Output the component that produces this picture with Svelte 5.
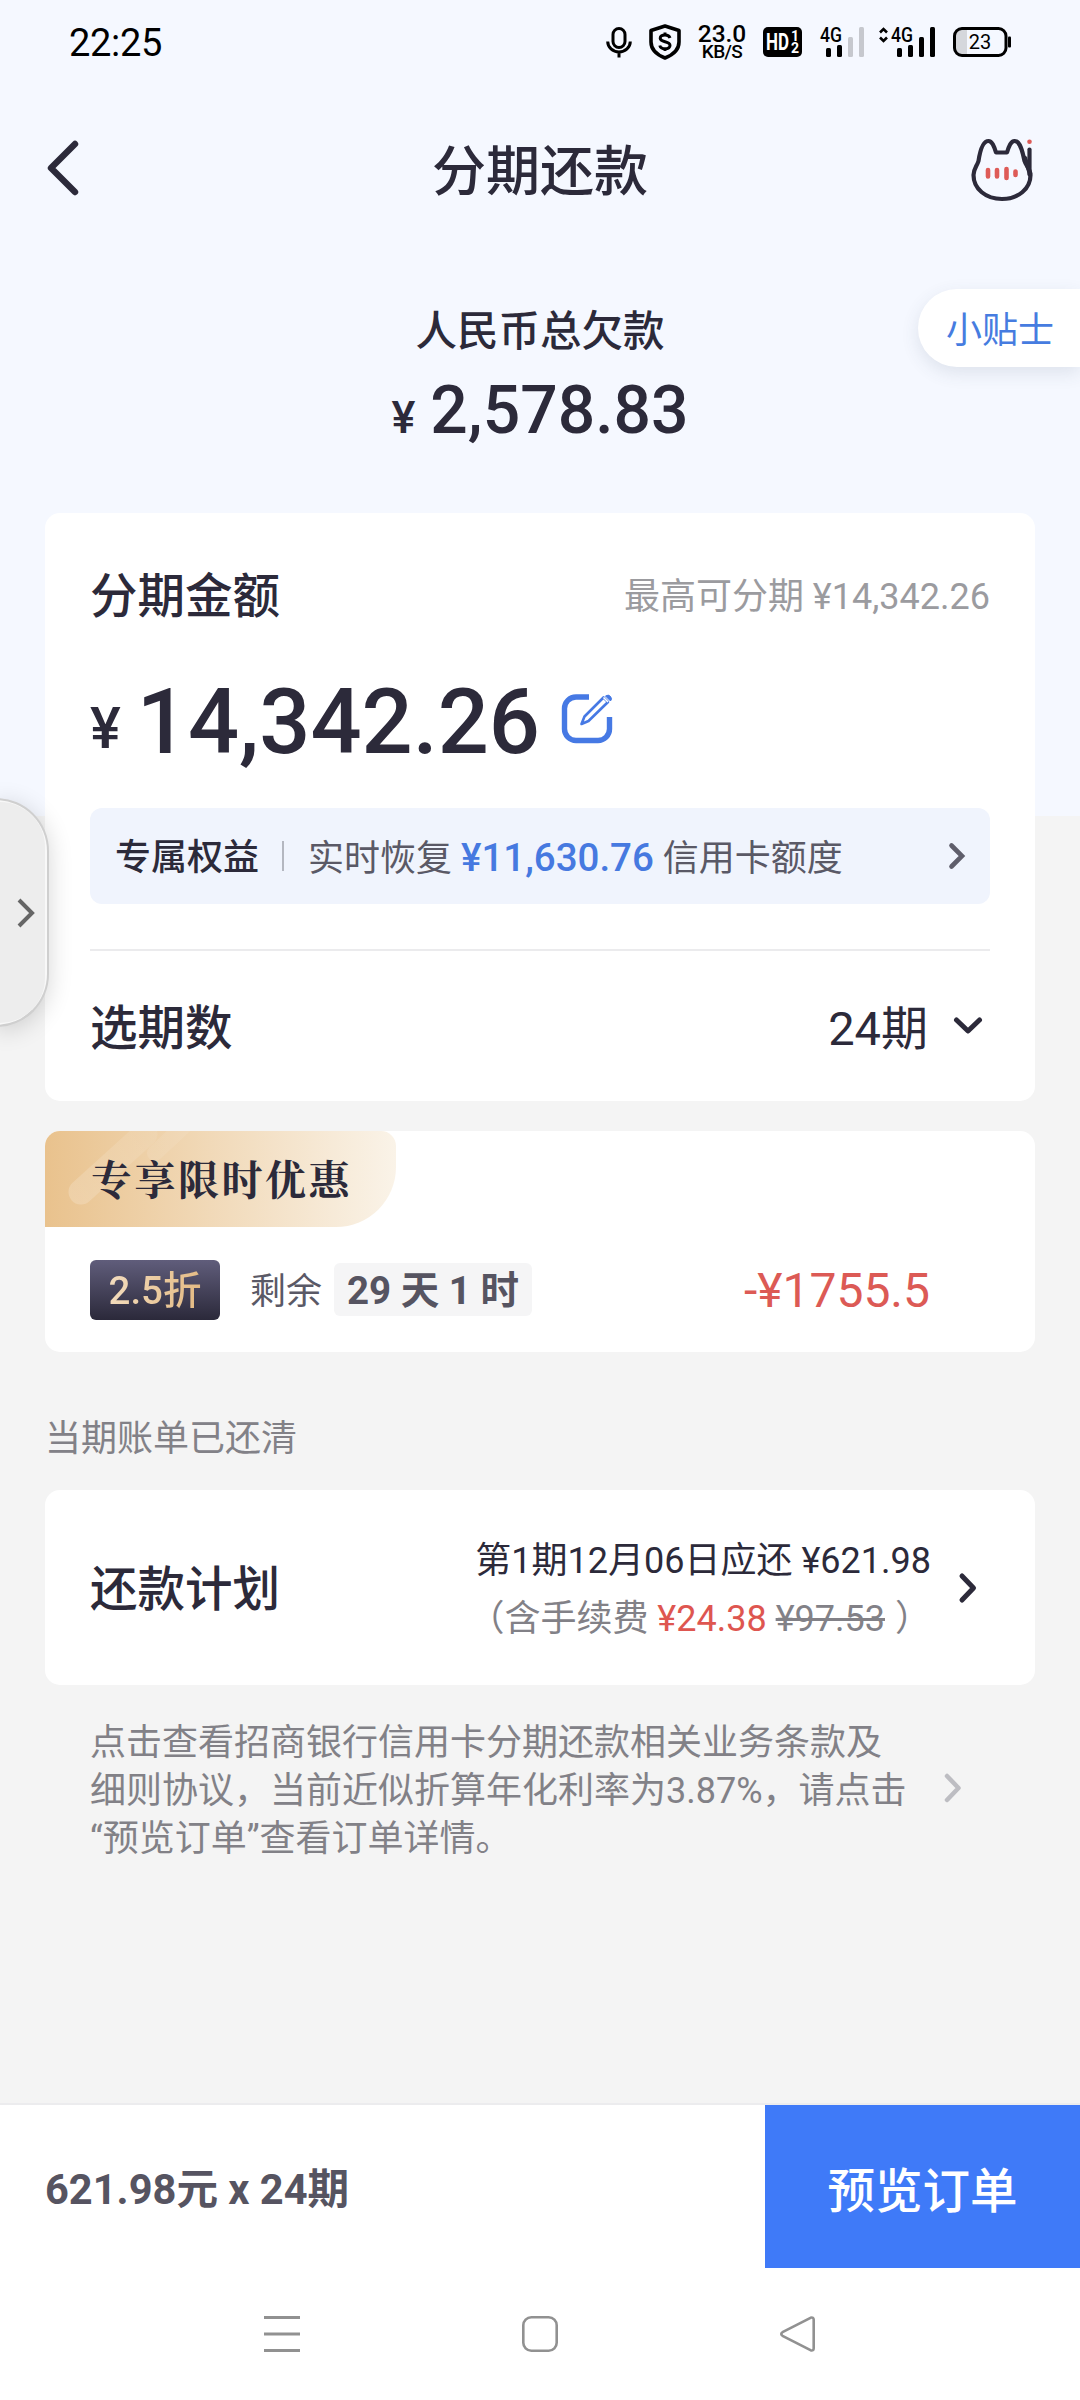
<script>
  const speed = { value: '23.0', unit: 'KB/S' };
  const battery = 23;

  const order = {
    totalDebt: '2,578.83',
    amount: '14,342.26',
    restored: '¥11,630.76',
    periods: 24,
    discount: '-¥1755.5',
    perPeriod: '621.98'
  };

  const terms = [
    '点击查看招商银行信用卡分期还款相关业务条款及',
    '细则协议，当前近似折算年化利率为3.87%，请点击',
    '“预览订单”查看订单详情。'
  ];
</script>

{#snippet signal(level)}
  <svg class="signal" width="45" height="36" viewBox="0 -3 45 36">
    <text x="0" y="15" class="signal-label" textLength="22" lengthAdjust="spacingAndGlyphs">4G</text>
    {#each [9, 12, 20, 30] as h, i}
      <rect x={6 + i * 11} y={30 - h} width="5" height={h} rx="1.5" fill={i < level ? '#000' : '#c6c8ce'} />
    {/each}
  </svg>
{/snippet}

<div class="screen">
  <div class="status-bar">
    <span class="clock">22:25</span>
    <div class="status-icons">
      <svg class="mic" width="26" height="32" viewBox="0 0 26 32" fill="none" stroke="#000" stroke-width="3">
        <rect x="7" y="2.5" width="12" height="19" rx="6" />
        <path d="M1.7 15.5a11.3 10.5 0 0 0 22.6 0M13 26v5.5" />
      </svg>
      <svg class="shield" width="32" height="36" viewBox="0 0 32 36" fill="none" stroke="#000" stroke-width="3.6" stroke-linejoin="round">
        <path d="M16 2 30 6.5V18c0 8-5 12.5-14 16C7 30.5 2 26 2 18V6.5Z" />
        <path d="M21 14c-.6-2-2.4-3-5-3-2.8 0-4.8 1.2-4.8 3.3 0 4.4 9.8 2.4 9.8 7 0 2.2-2 3.5-5 3.5-2.8 0-4.7-1.2-5.2-3.3M16 8.500v2.500M16 24.500v2.500" stroke-width="3" />
      </svg>
      <div class="speed">
        <span class="speed-value">{speed.value}</span>
        <span class="speed-unit">{speed.unit}</span>
      </div>
      <svg class="hd" width="39" height="30" viewBox="0 0 39 30">
        <rect width="39" height="30" rx="5" />
        <text x="3" y="23" class="hd-label" textLength="23" lengthAdjust="spacingAndGlyphs">HD</text>
        <text x="28" y="14" class="hd-index">1</text>
        <text x="28" y="25.5" class="hd-index">2</text>
      </svg>
      {@render signal(2)}
      <svg class="data" width="9" height="16" viewBox="0 0 9 16" fill="none" stroke="#000" stroke-width="2.6">
        <path d="M1 5.5 4.5 2 8 5.5M1 10.5 4.5 14 8 10.5" />
      </svg>
      {@render signal(4)}
      <svg class="battery" width="58" height="30" viewBox="0 0 58 30">
        <path d="M2 9a7 7 0 0 1 7-7h5v26H9a7 7 0 0 1-7-7Z" fill="#d5d7dc" />
        <rect x="1.5" y="1.5" width="51.5" height="27" rx="7.5" fill="none" stroke="#000" stroke-width="3" />
        <rect x="55" y="9.5" width="3" height="11" rx="1" />
        <text x="27" y="22" class="battery-label">{battery}</text>
      </svg>
    </div>
  </div>

  <header class="header">
    <svg class="back" width="36" height="60" viewBox="0 0 36 60" fill="none" stroke="#2c2a3a" stroke-width="6.4" stroke-linecap="round" stroke-linejoin="round">
      <path d="M30 6 6 30 30 54" />
    </svg>
    <h1 class="title">分期还款</h1>
    <svg class="cat" width="62" height="64" viewBox="0 0 62 64" fill="none" stroke="#2c2a3a" stroke-width="4.2" stroke-linecap="round" stroke-linejoin="round">
      <path d="M25 14.500h11C38 8 40 3 43.500 3 49 3 51.500 13 53.500 23c1.500 5 6 8 6 14C59.500 51 47 61 31 61S2.500 51 2.500 37C2.500 31 6 28 7.500 23 9 13 12 3 17.500 3c3.500 0 5.500 5 7.500 11.500Z" />
      <path d="M58.500 11.500v25" />
      <path d="M54 20 59 36" />
      <circle cx="58.5" cy="3.8" r="2.3" fill="#de5b57" stroke="none" />
      <path d="M17 32v6.500M26 32v6.500M35.500 31v9M44.500 33.500v3.500" stroke="#de5b57" stroke-width="4.600" />
    </svg>
  </header>

  <button class="tip">小贴士</button>

  <section class="summary">
    <p class="summary-label">人民币总欠款</p>
    <p class="summary-amount"><span class="yen">¥</span>{order.totalDebt}</p>
  </section>

  <section class="card amount-card">
    <div class="amount-head">
      <h2>分期金额</h2>
      <span class="limit">最高可分期 ¥14,342.26</span>
    </div>
    <div class="amount-row">
      <span class="yen">¥</span>
      <span class="amount">{order.amount}</span>
      <svg class="edit" width="52" height="52" viewBox="0 0 52 52" fill="none" stroke="#4679e4" stroke-linejoin="round">
        <path d="M28 4H15A11.500 11.500 0 0 0 3.500 15.500V36A11.500 11.500 0 0 0 15 47.500h22A11.500 11.500 0 0 0 48.500 36V24" stroke-width="5.400" />
        <path d="M20.500 31 23.500 23.500 42.500 4.500 47 9 27.500 28Z" stroke-width="2.600" />
        <path d="M42.500 4.500 47 9" stroke="#fff" stroke-width="1.600" />
        <path d="M44.500 3q3-2 5 .5t0 4.500Z" fill="#4679e4" stroke-width="1" />
      </svg>
    </div>
    <div class="benefit">
      <strong>专属权益</strong>
      <i class="bar"></i>
      <span class="benefit-text">实时恢复 <b>{order.restored}</b> 信用卡额度</span>
      <svg class="chevron" width="18" height="28" viewBox="0 0 18 28" fill="none" stroke="#5f5e6b" stroke-width="4.6" stroke-linecap="round">
        <path d="M3.5 3.5 14 14 3.5 24.5" />
      </svg>
    </div>
    <hr />
    <div class="period-row">
      <h2>选期数</h2>
      <span class="period">{order.periods}期</span>
      <svg width="30" height="20" viewBox="0 0 30 20" fill="none" stroke="#2c2a3a" stroke-width="5" stroke-linecap="round" stroke-linejoin="round">
        <path d="M3.5 4 15 15 26.5 4" />
      </svg>
    </div>
  </section>

  <section class="card offer-card">
    <div class="ribbon">
      <svg class="ribbon-shine" width="150" height="96" viewBox="0 0 150 96" fill="none" stroke="url(#shine)" stroke-linecap="round">
        <defs>
          <linearGradient id="shine" gradientUnits="userSpaceOnUse" x1="20" y1="70" x2="100" y2="0">
            <stop offset="0" stop-color="#fff" stop-opacity=".2" />
            <stop offset="1" stop-color="#fff" stop-opacity=".08" />
          </linearGradient>
        </defs>
        <path d="M36 61 100 3" stroke-width="25" />
        <path d="M110 22 142 -8" stroke-width="16" />
      </svg>
      <span class="ribbon-text">专享限时优惠</span>
    </div>
    <div class="offer-row">
      <span class="badge"><span class="badge-text">2.5折</span></span>
      <span class="left-label">剩余</span>
      <span class="countdown">29 天 1 时</span>
      <span class="discount">{order.discount}</span>
    </div>
  </section>

  <p class="note">当期账单已还清</p>

  <section class="card plan-card">
    <h2>还款计划</h2>
    <div class="plan-detail">
      <p>第1期12月06日应还 ¥{order.perPeriod}</p>
      <p class="fee">（含手续费 <em>¥24.38</em> <s>¥97.53</s><span class="close">）</span></p>
    </div>
    <svg width="20" height="32" viewBox="0 0 20 32" fill="none" stroke="#2c2a3a" stroke-width="5" stroke-linecap="round" stroke-linejoin="round">
      <path d="M4 4 15.5 16 4 28" />
    </svg>
  </section>

  <section class="terms">
    <div class="terms-text">
      {#each terms as line}
        <p>{line}</p>
      {/each}
    </div>
    <svg width="20" height="32" viewBox="0 0 20 32" fill="none" stroke="#bdbdc2" stroke-width="4.5" stroke-linecap="round" stroke-linejoin="round">
      <path d="M4 4 15.5 16 4 28" />
    </svg>
  </section>

  <footer class="order-bar">
    <span class="order-sum">{order.perPeriod}元 x {order.periods}期</span>
    <button class="preview">预览订单</button>
  </footer>

  <nav class="system-nav">
    <svg width="40" height="40" viewBox="0 0 40 40" fill="none" stroke="#919191" stroke-width="3">
      <path d="M2 3.5h36M2 20h36M2 36.5h36" />
    </svg>
    <svg width="40" height="40" viewBox="0 0 40 40" fill="none" stroke="#919191" stroke-width="2.6">
      <rect x="3.3" y="3.3" width="33.4" height="33.4" rx="8" />
    </svg>
    <svg width="40" height="40" viewBox="0 0 40 40" fill="none" stroke="#919191" stroke-width="2.6" stroke-linejoin="round">
      <path d="M32.5 3.800 4.500 18.200q-2.500 1.800 0 3.600L32.500 36.200q3.200 1 3.200-2V5.800q0-3-3.200-2Z" />
    </svg>
  </nav>

  <div class="side-handle">
    <svg width="20" height="32" viewBox="0 0 20 32" fill="none" stroke="#666" stroke-width="4">
      <path d="M3 3 16 16 3 29" />
    </svg>
  </div>
</div>

<style>
  :global(body) {
    margin: 0;
  }

  .screen {
    position: relative;
    display: flex;
    flex-direction: column;
    width: 1080px;
    height: 2400px;
    overflow: hidden;
    background: linear-gradient(#f5f8ff 0, #f5f8ff 816px, #f4f4f4 816px);
    color: #2c2a3a;
    font-family: Roboto, 'Noto Sans CJK SC', sans-serif;
    font-size: 36px;
    line-height: 48px;
  }

  h1, h2, p {
    margin: 0;
    font-weight: 500;
  }

  p {
    font-weight: 400;
  }

  h2 {
    font-size: 47.5px;
    line-height: 60px;
  }

  svg {
    display: block;
    flex: none;
  }

  button {
    border: 0;
    padding: 0;
    font-family: inherit;
  }

  .status-bar {
    display: flex;
    align-items: center;
    justify-content: space-between;
    height: 84px;
    padding: 0 69px;
    color: #000;
  }

  .clock {
    padding-top: 2px;
    font-size: 38px;
    letter-spacing: -.3px;
  }

  .status-icons {
    display: flex;
    align-items: center;
  }

  .mic {
    margin-right: 17px;
  }

  .shield {
    margin-right: 15px;
  }

  .speed {
    display: flex;
    flex-direction: column;
    align-items: center;
    width: 52px;
    margin-right: 15px;
    font-weight: 500;
  }

  .speed-value {
    font-size: 24.5px;
    line-height: 19px;
  }

  .speed-unit {
    font-size: 19px;
    line-height: 18px;
    letter-spacing: -.6px;
  }

  .hd {
    margin-right: 18px;
  }

  .hd-label {
    fill: #fff;
    font-size: 23px;
    font-weight: 700;
  }

  .hd-index {
    fill: #fff;
    font-size: 14px;
    font-weight: 700;
  }

  .signal {
    overflow: visible;
  }

  .signal-label {
    font-size: 20px;
    font-weight: 500;
  }

  .data {
    margin: -14px 3px 0 14px;
  }

  .battery {
    margin-left: 17px;
  }

  .battery-label {
    font-size: 20px;
    text-anchor: middle;
  }

  .header {
    display: flex;
    align-items: center;
    justify-content: space-between;
    height: 172px;
    padding: 0 47px 0 45px;
  }

  .back {
    margin: 0 28px 4px 0;
  }

  .title {
    padding-top: 6px;
    font-size: 54px;
    line-height: 64px;
  }

  .tip {
    position: absolute;
    top: 289px;
    right: 0;
    width: 162px;
    height: 78px;
    padding: 0 0 2px 2px;
    border-radius: 39px 0 0 39px;
    background: #fff;
    box-shadow: 0 6px 18px rgba(60, 70, 100, .12);
    color: #467ce0;
    font-size: 36px;
  }

  .summary {
    padding-top: 51px;
    text-align: center;
  }

  .summary-label {
    font-size: 41.5px;
    line-height: 50px;
    font-weight: 500;
  }

  .summary-amount {
    height: 80px;
    margin-top: 14px;
    font-size: 66px;
    font-weight: 500;
    line-height: 80px;
  }

  .summary-amount .yen {
    margin-right: 15px;
    font-size: 45px;
  }

  .card {
    margin: 0 45px;
    border-radius: 15px;
    background: #fff;
  }

  .amount-card {
    box-sizing: border-box;
    height: 588px;
    margin-top: 62px;
    padding: 54px 45px 0;
  }

  .amount-head {
    display: flex;
    align-items: center;
    justify-content: space-between;
  }

  .limit {
    color: #9b9b9f;
  }

  .amount-row {
    display: flex;
    align-items: center;
    height: 100px;
    margin-top: 46px;
    font-weight: 500;
  }

  .amount-row .yen {
    margin: 9px 16px 0 0;
    font-size: 58px;
  }

  .amount {
    font-size: 90px;
    line-height: 100px;
  }

  .edit {
    margin: 0 0 8px 21px;
  }

  .benefit {
    display: flex;
    align-items: center;
    height: 96px;
    margin-top: 35px;
    padding: 0 24px 0 25px;
    border-radius: 12px;
    background: #f0f4fd;
  }

  .benefit strong {
    padding-top: 4px;
    font-weight: 500;
  }

  .bar {
    width: 2px;
    height: 30px;
    margin: 0 24px 0 23px;
    background: #b4b7c0;
  }

  .benefit-text {
    padding-top: 4px;
    color: #5a5966;
  }

  .benefit-text b {
    color: #4679e0;
    font-size: 38.500px;
    font-weight: 500;
  }

  .chevron {
    margin-left: auto;
  }

  hr {
    height: 2px;
    margin: 45px 0 0;
    border: 0;
    background: #ebebed;
  }

  .period-row {
    display: flex;
    align-items: center;
    height: 149px;
    padding-right: 7px;
  }

  .period-row h2 {
    padding-top: 6px;
  }

  .period {
    margin: 0 25px 0 auto;
    padding-top: 6px;
    font-size: 47px;
    line-height: 60px;
  }

  .offer-card {
    height: 221px;
    margin-top: 30px;
  }

  .ribbon {
    position: relative;
    display: flex;
    align-items: center;
    box-sizing: border-box;
    width: 351px;
    height: 96px;
    padding: 0 0 3px 46px;
    overflow: hidden;
    border-radius: 15px 15px 60px 0;
    background: linear-gradient(90deg, #e9c28d, #faf3e8);
  }

  .ribbon-shine {
    position: absolute;
    top: 0;
    left: 0;
  }

  .ribbon-text {
    position: relative;
    font-family: 'Noto Serif CJK SC', 'Noto Serif SC', 'Noto Sans CJK SC', serif;
    font-size: 41px;
    font-weight: 700;
    letter-spacing: 2.5px;
  }

  .offer-row {
    display: flex;
    align-items: center;
    height: 125px;
    padding: 0 105px 0 45px;
  }

  .badge {
    display: flex;
    align-items: center;
    justify-content: center;
    width: 130px;
    height: 60px;
    border-radius: 6px;
    background: linear-gradient(#605d7b, #2b293a);
  }

  .badge-text {
    padding-top: 3px;
    background: linear-gradient(100deg, #f3ddc0, #e3b981);
    background-clip: text;
    color: transparent;
    font-size: 38.5px;
    font-weight: 500;
  }

  .left-label {
    margin: 4px 12px 0 30px;
    color: #5a5966;
  }

  .countdown {
    width: 198px;
    height: 53px;
    border-radius: 6px;
    background: #f5f5f6;
    color: #565461;
    font-size: 38.5px;
    font-weight: 700;
    line-height: 56px;
    text-align: center;
  }

  .discount {
    margin-left: auto;
    padding-top: 2px;
    color: #dc5a55;
    font-size: 48px;
  }

  .note {
    margin: 62px 45px 0;
    color: #828187;
    line-height: 50px;
  }

  .plan-card {
    display: flex;
    align-items: center;
    height: 195px;
    margin-top: 26px;
    padding: 0 57px 0 45px;
  }

  .plan-card h2 {
    padding-top: 4px;
  }

  .plan-detail {
    margin: 0 27px 0 auto;
    padding-top: 4px;
    line-height: 58px;
    text-align: right;
  }

  .fee {
    color: #828187;
  }

  .fee em {
    color: #de5650;
    font-style: normal;
  }

  .close {
    margin-left: 10px;
  }

  .terms {
    display: flex;
    align-items: center;
    justify-content: space-between;
    margin: 34px 117px 0 90px;
    color: #828187;
  }

  .terms svg {
    margin-bottom: 6px;
  }

  .terms-text {
    white-space: nowrap;
  }

  .order-bar {
    display: flex;
    align-items: center;
    justify-content: space-between;
    box-sizing: border-box;
    height: 165px;
    margin-top: auto;
    padding-left: 45px;
    border-top: 2px solid #ececee;
    background: #fff;
  }

  .order-sum {
    padding-top: 7px;
    color: #565461;
    font-size: 41.6px;
    font-weight: 700;
  }

  .preview {
    width: 315px;
    height: 163px;
    padding-top: 1px;
    background: #3f7af8;
    color: #fff;
    font-size: 47.5px;
    font-weight: 500;
  }

  .system-nav {
    display: flex;
    align-items: center;
    gap: 218px;
    box-sizing: border-box;
    height: 132px;
    padding-left: 262px;
    background: #fff;
  }

  .side-handle {
    position: absolute;
    top: 798px;
    left: -4px;
    display: flex;
    align-items: center;
    box-sizing: border-box;
    width: 53px;
    height: 229px;
    padding-left: 18px;
    border: 2px solid #cfcfcf;
    border-radius: 0 54px 54px 0;
    background: #ededed;
    box-shadow: inset 0 0 0 2px #f8f8f8, 0 4px 24px rgba(0, 0, 0, .16);
  }
</style>
